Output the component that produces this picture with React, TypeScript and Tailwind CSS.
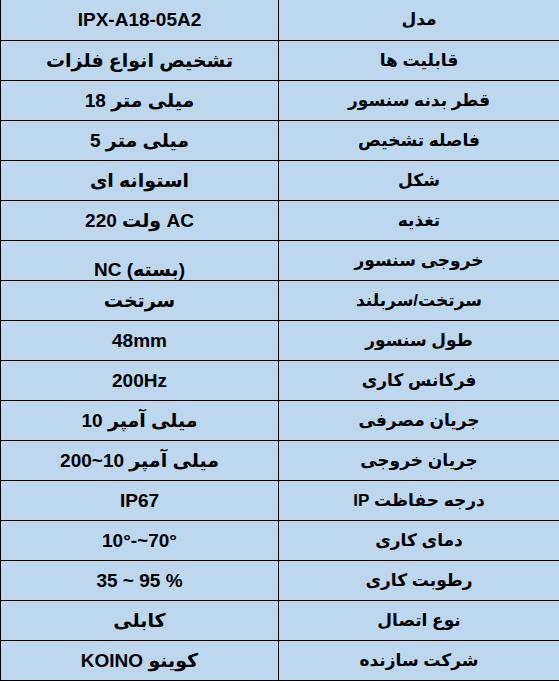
const rows: { value: string; label: string; ltr?: boolean; low?: boolean }[] = [
  { value: "IPX-A18-05A2", label: "مدل", ltr: true },
  { value: "تشخیص انواع فلزات", label: "قابلیت ها" },
  { value: "میلی متر 18", label: "قطر بدنه سنسور" },
  { value: "میلی متر 5", label: "فاصله تشخیص" },
  { value: "استوانه ای", label: "شکل" },
  { value: "AC ولت 220", label: "تغذیه" },
  { value: "(بسته) NC", label: "خروجی سنسور", low: true },
  { value: "سرتخت", label: "سرتخت/سربلند" },
  { value: "48mm", label: "طول سنسور", ltr: true },
  { value: "200Hz", label: "فرکانس کاری", ltr: true },
  { value: "میلی آمپر 10", label: "جریان مصرفی" },
  { value: "میلی آمپر 10~200", label: "جریان خروجی" },
  { value: "IP67", label: "درجه حفاظت IP", ltr: true },
  { value: "10°-~70°", label: "دمای کاری", ltr: true },
  { value: "35 ~ 95 %", label: "رطوبت کاری", ltr: true },
  { value: "کابلی", label: "نوع اتصال" },
  { value: "کوینو KOINO", label: "شرکت سازنده" },
];

export default function App() {
  return (
    <div
      className="w-[559px] h-[681px] bg-[#bdd7ee] text-black font-bold overflow-hidden"
      style={{ fontFamily: '"Liberation Sans", "DejaVu Sans", sans-serif' }}
    >
      <div className="border-l border-b border-black">
        {rows.map((r, i) => (
          <div
            key={i}
            className={`flex h-[40px] ${i > 0 ? "border-t border-black" : ""}`}
          >
            {/* مقدار */}
            <div
              dir={r.ltr ? "ltr" : "rtl"}
              className={`w-[278px] border-r border-black flex justify-center overflow-hidden text-[19px] leading-[22px] ${
                r.low ? "items-start pt-[18px]" : "items-center"
              }`}
            >
              {r.value}
            </div>
            {/* عنوان */}
            <div
              dir="rtl"
              className={`flex-1 flex justify-center text-[17px] leading-[22px] ${
                r.low ? "items-start pt-[9px]" : "items-center"
              }`}
            >
              {r.label}
            </div>
          </div>
        ))}
      </div>
    </div>
  );
}
